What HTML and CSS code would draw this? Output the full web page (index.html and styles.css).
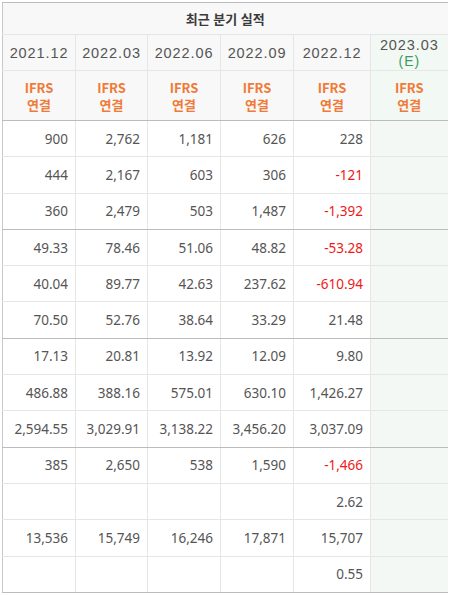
FILE: index.html
```html
<!DOCTYPE html>
<html lang="ko">
<head>
  <meta charset="UTF-8" />
  <meta name="viewport" content="width=device-width, initial-scale=1.0"/>
  <title>최근 분기 실적</title>
  <link rel="stylesheet" href="styles.css">
</head>
<body>
  <section class="wrap">
    <table class="perf">
      <colgroup>
        <col class="c-a"><col class="c-b"><col class="c-a"><col class="c-a"><col class="c-c"><col class="c-c">
      </colgroup>
      <thead>
        <tr class="title-row">
          <th colspan="6">최근 분기 실적</th>
        </tr>
        <tr class="year-row">
          <th>2021.12</th>
          <th>2022.03</th>
          <th>2022.06</th>
          <th>2022.09</th>
          <th>2022.12</th>
          <th class="est">2023.03<br><span class="e">(E)</span></th>
        </tr>
        <tr class="ifrs-row">
          <th>IFRS<br>연결</th>
          <th>IFRS<br>연결</th>
          <th>IFRS<br>연결</th>
          <th>IFRS<br>연결</th>
          <th>IFRS<br>연결</th>
          <th class="est">IFRS<br>연결</th>
        </tr>
      </thead>
      <tbody>
        <tr><td>900</td><td>2,762</td><td>1,181</td><td>626</td><td>228</td><td class="est"></td></tr>
        <tr><td>444</td><td>2,167</td><td>603</td><td>306</td><td class="neg">-121</td><td class="est"></td></tr>
        <tr class="grp-end"><td>360</td><td>2,479</td><td>503</td><td>1,487</td><td class="neg">-1,392</td><td class="est"></td></tr>

        <tr><td>49.33</td><td>78.46</td><td>51.06</td><td>48.82</td><td class="neg">-53.28</td><td class="est"></td></tr>
        <tr><td>40.04</td><td>89.77</td><td>42.63</td><td>237.62</td><td class="neg">-610.94</td><td class="est"></td></tr>
        <tr class="grp-end"><td>70.50</td><td>52.76</td><td>38.64</td><td>33.29</td><td>21.48</td><td class="est"></td></tr>

        <tr><td>17.13</td><td>20.81</td><td>13.92</td><td>12.09</td><td>9.80</td><td class="est"></td></tr>
        <tr><td>486.88</td><td>388.16</td><td>575.01</td><td>630.10</td><td>1,426.27</td><td class="est"></td></tr>
        <tr class="grp-end"><td>2,594.55</td><td>3,029.91</td><td>3,138.22</td><td>3,456.20</td><td>3,037.09</td><td class="est"></td></tr>

        <tr><td>385</td><td>2,650</td><td>538</td><td>1,590</td><td class="neg">-1,466</td><td class="est"></td></tr>
        <tr><td></td><td></td><td></td><td></td><td>2.62</td><td class="est"></td></tr>
        <tr><td>13,536</td><td>15,749</td><td>16,246</td><td>17,871</td><td>15,707</td><td class="est"></td></tr>
        <tr class="grp-end"><td></td><td></td><td></td><td></td><td>0.55</td><td class="est"></td></tr>
      </tbody>
    </table>
  </section>
</body>
</html>
```

FILE: styles.css
```css
* {
  margin: 0;
  padding: 0;
  box-sizing: border-box;
}

html, body {
  background: #fff;
}

.wrap {
  padding: 2px 0 0 2px;
}

.perf {
  width: 445px;
  table-layout: fixed;
  border-collapse: collapse;
  border-top: 1px solid #bcbcbc;
  border-left: 1px solid #c8c8c8;
  font-family: "Noto Sans", "DejaVu Sans", sans-serif;
}

.c-a { width: 73px; }
.c-b { width: 72px; }
.c-c { width: 77px; }

.perf th,
.perf td {
  border-right: 1px solid #e6e6e6;
  border-bottom: 1px solid #e6e6e6;
}

.perf th:last-child,
.perf td:last-child {
  border-right: none;
}

.perf thead th {
  background: #f8f8f8;
  font-weight: normal;
  text-align: center;
  font-family: "Noto Sans CJK KR", "Noto Sans", sans-serif;
}

.perf .title-row th {
  height: 32px;
  font-size: 13px;
  font-weight: bold;
  color: #3a3a3a;
  border-right: none;
}

.perf .year-row th {
  height: 36px;
  font-family: "Liberation Sans", "Noto Sans", sans-serif;
  font-size: 14.5px;
  letter-spacing: 0.9px;
  color: #555;
  line-height: 16px;
}

.year-row .e {
  color: #3f9a5e;
  font-size: 14px;
}

.perf .ifrs-row th {
  height: 50px;
  font-size: 13px;
  font-weight: bold;
  line-height: 17px;
  color: #f07a36;
  border-bottom: 1px solid #bcbcbc;
}

.perf thead th.est {
  background: #f2f8f3;
}

.perf td {
  height: 36.3px;
  padding-right: 7px;
  text-align: right;
  font-size: 13.5px;
  color: #555;
}

.perf td.est {
  background: #f3f8f4;
}

.perf td.neg {
  color: #f01818;
}

.perf tr.grp-end td {
  border-bottom: 1px solid #bcbcbc;
}
```
